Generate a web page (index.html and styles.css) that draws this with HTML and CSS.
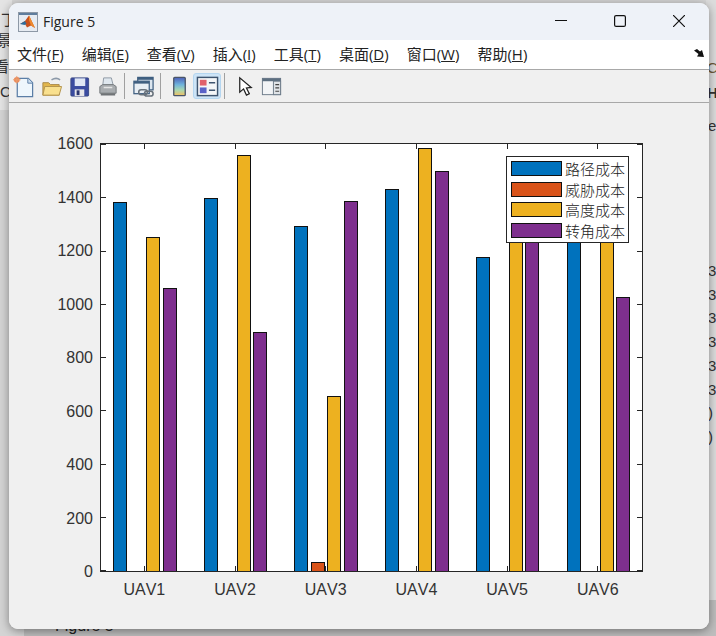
FILE: index.html
```html
<!DOCTYPE html>
<html lang="en">
<head>
    <meta charset="UTF-8">
    <title>Figure 5</title>
    <link rel="stylesheet" href="styles.css">
</head>
<body>
    <!-- bits of the window behind, only the edges show -->
    <div class="behind">
        <div class="behind-left">
            <span class="frag frag-a">丁</span>
            <span class="frag frag-b">景</span>
            <span class="frag frag-c">看</span>
            <span class="frag frag-d">C</span>
        </div>
        <div class="behind-right">
            <span class="frag frag-e">C</span>
            <span class="frag frag-f">H</span>
            <span class="frag frag-g">e</span>
            <div class="frag-list">
                <span>3</span><span>3</span><span>3</span><span>3</span><span>3</span><span>3</span><span>)</span><span>)</span>
            </div>
        </div>
        <div class="behind-bottom"><span>Figure 5</span></div>
    </div>

    <div class="window">
        <div class="titlebar">
            <svg class="app-icon" viewBox="0 0 20 20">
                <rect x="0.5" y="0.5" width="19" height="19" fill="#e6ebf2" stroke="#8d98a6"/>
                <rect x="1" y="1" width="18" height="2" fill="#5f7d9d"/>
                <path d="M2 12 L7 9 L11 3.5 L17 16 L13 13.5 L9 15.5 L7 12 Z" fill="#c8501c"/>
                <path d="M11 3.5 L17 16 L13 13.5 L11 8 Z" fill="#ee8a2e"/>
                <path d="M2 12 L7 9 L8.5 12 L6.5 13 Z" fill="#2d6c9c"/>
            </svg>
            <span class="title">Figure 5</span>
            <div class="win-controls">
                <svg viewBox="0 0 12 12"><path d="M0 5.5 H12" stroke="#111" stroke-width="1.2" fill="none"/></svg>
                <svg viewBox="0 0 12 12"><rect x="0.6" y="0.6" width="10.8" height="10.8" rx="1.5" stroke="#111" stroke-width="1.2" fill="none"/></svg>
                <svg viewBox="0 0 12 12"><path d="M0 0 L12 12 M12 0 L0 12" stroke="#111" stroke-width="1.2" fill="none"/></svg>
            </div>
        </div>

        <div class="menubar">
            <span class="menu-item">文件(<u>F</u>)</span>
            <span class="menu-item">编辑(<u>E</u>)</span>
            <span class="menu-item">查看(<u>V</u>)</span>
            <span class="menu-item">插入(<u>I</u>)</span>
            <span class="menu-item">工具(<u>T</u>)</span>
            <span class="menu-item">桌面(<u>D</u>)</span>
            <span class="menu-item">窗口(<u>W</u>)</span>
            <span class="menu-item">帮助(<u>H</u>)</span>
            <svg class="dock-arrow" viewBox="0 0 10 8"><path d="M0 1.5 L3 0 L6 2.5 L8 1 L10 8 L3 7.5 L4.5 5 Z" fill="#111"/></svg>
        </div>

        <div class="toolbar">
            <div class="tool">
                <svg viewBox="0 0 24 24">
                    <path d="M5.5 3.5 H17 L21.5 8 V22.5 H5.5 Z" fill="#eef6fc" stroke="#5b7ea6" stroke-width="1.3"/>
                    <path d="M16.5 3.5 V8.5 H21.5" fill="#cfe0f0" stroke="#5b7ea6"/>
                    <circle cx="5" cy="5" r="3" fill="#ec8a5a"/>
                    <path d="M5 1 V9 M1 5 H9" stroke="#e8a070" stroke-width="1"/>
                </svg>
            </div>
            <div class="tool">
                <svg viewBox="0 0 24 24">
                    <path d="M12 5 Q17 2 21 5" stroke="#8c99a8" stroke-width="1.6" fill="none"/>
                    <path d="M3 8 H9 L11 10 H20 V21 H3 Z" fill="#e2b64c" stroke="#a8894a"/>
                    <path d="M3 21 L5 12 H22.5 L20 21 Z" fill="#f9e08e" stroke="#b3934c"/>
                </svg>
            </div>
            <div class="tool">
                <svg viewBox="0 0 24 24">
                    <rect x="3" y="3" width="18.5" height="19" rx="1" fill="#3a4ba0" stroke="#3c4a86"/>
                    <rect x="7" y="3.5" width="11" height="8" fill="#dfe6f4"/>
                    <rect x="7" y="15" width="10" height="7" fill="#e6e6ea"/>
                    <rect x="9" y="16" width="3" height="5" fill="#2b3570"/>
                </svg>
            </div>
            <div class="tool">
                <svg viewBox="0 0 24 24">
                    <path d="M8 3 H16 L18 11 H7 Z" fill="#dfe7ee" stroke="#8f9aa4"/>
                    <path d="M4 12 L7 10 H18 L21 12 V19 H4 Z" fill="#a8acaf" stroke="#74787c"/>
                    <path d="M5 19 H20 V21.5 H5 Z" fill="#6f7376"/>
                    <path d="M8 13 H17" stroke="#e4e4e4" stroke-width="1.5"/>
                </svg>
            </div>
            <div class="tool-sep"></div>
            <div class="tool">
                <svg viewBox="0 0 24 24">
                    <rect x="6" y="2.5" width="16" height="13" fill="#dce6ef" stroke="#3f5f80" stroke-width="1.3"/>
                    <rect x="6" y="2.5" width="16" height="2.5" fill="#3f5f80"/>
                    <rect x="2" y="6.5" width="16" height="13" fill="#e8eef4" stroke="#3f5f80" stroke-width="1.3"/>
                    <rect x="2" y="6.5" width="16" height="2.5" fill="#3f5f80"/>
                    <rect x="7" y="15.5" width="9" height="5" rx="2.5" fill="none" stroke="#68727c" stroke-width="1.6"/>
                    <rect x="13" y="17" width="9" height="5" rx="2.5" fill="none" stroke="#68727c" stroke-width="1.6"/>
                </svg>
            </div>
            <div class="tool-sep"></div>
            <div class="tool">
                <svg viewBox="0 0 24 24">
                    <defs>
                        <linearGradient id="cbar" x1="0" y1="0" x2="0" y2="1">
                            <stop offset="0" stop-color="#4d5fb8"/>
                            <stop offset="0.4" stop-color="#6fb4dc"/>
                            <stop offset="0.7" stop-color="#a9d8b0"/>
                            <stop offset="1" stop-color="#f2c060"/>
                        </linearGradient>
                    </defs>
                    <rect x="6" y="2.5" width="12" height="19" rx="1" fill="url(#cbar)" stroke="#4a5568" stroke-width="1.4"/>
                </svg>
            </div>
            <div class="tool tool-on">
                <svg viewBox="0 0 24 24">
                    <rect x="1.5" y="2.5" width="21" height="19" fill="#f4f6f8" stroke="#3f5570" stroke-width="1.5"/>
                    <rect x="4" y="5" width="7" height="6" fill="#e0606c"/>
                    <rect x="4" y="13" width="7" height="6" fill="#5a62c8"/>
                    <path d="M13.5 8 H20 M13.5 16 H20" stroke="#3f5570" stroke-width="1.6"/>
                </svg>
            </div>
            <div class="tool-sep"></div>
            <div class="tool tool-gap">
                <svg viewBox="0 0 24 24">
                    <path d="M6 3 L6 18 L10 14.5 L13 21 L16 19.5 L13 13.5 L18 13 Z" fill="#fff" stroke="#222" stroke-width="1.3"/>
                </svg>
            </div>
            <div class="tool tool-left">
                <svg viewBox="0 0 24 24">
                    <rect x="2.5" y="3.5" width="19" height="17" fill="#f2f4f6" stroke="#6e7c8a"/>
                    <rect x="2.5" y="3.5" width="19" height="3" fill="#5d6f80"/>
                    <rect x="14" y="6.5" width="7.5" height="14" fill="#dfe3e7" stroke="#6e7c8a"/>
                    <path d="M16 10 H20 M16 13.5 H20 M16 17 H20" stroke="#444" stroke-width="1.2"/>
                </svg>
            </div>
        </div>

        <div class="figure">
            <div class="plot">
                <div class="y-labels">
                    <span>1600</span><span>1400</span><span>1200</span><span>1000</span><span>800</span><span>600</span><span>400</span><span>200</span><span>0</span>
                </div>
                <div class="plot-main">
                    <div class="axes">
                        <div class="y-ticks">
                            <i></i><i></i><i></i><i></i><i></i><i></i><i></i><i></i><i></i>
                        </div>
                        <div class="groups">
                            <div class="group">
                                <div class="bar path" style="height:86.4%"></div>
                                <div class="bar threat" style="height:0"></div>
                                <div class="bar alt" style="height:78.2%"></div>
                                <div class="bar turn" style="height:66.3%"></div>
                            </div>
                            <div class="group">
                                <div class="bar path" style="height:87.3%"></div>
                                <div class="bar threat" style="height:0"></div>
                                <div class="bar alt" style="height:97.4%"></div>
                                <div class="bar turn" style="height:56%"></div>
                            </div>
                            <div class="group">
                                <div class="bar path" style="height:80.8%"></div>
                                <div class="bar threat" style="height:2.2%"></div>
                                <div class="bar alt" style="height:41%"></div>
                                <div class="bar turn" style="height:86.7%"></div>
                            </div>
                            <div class="group">
                                <div class="bar path" style="height:89.5%"></div>
                                <div class="bar threat" style="height:0"></div>
                                <div class="bar alt" style="height:99%"></div>
                                <div class="bar turn" style="height:93.7%"></div>
                            </div>
                            <div class="group">
                                <div class="bar path" style="height:73.5%"></div>
                                <div class="bar threat" style="height:0"></div>
                                <div class="bar alt" style="height:80%"></div>
                                <div class="bar turn" style="height:80%"></div>
                            </div>
                            <div class="group">
                                <div class="bar path" style="height:80%"></div>
                                <div class="bar threat" style="height:0"></div>
                                <div class="bar alt" style="height:80%"></div>
                                <div class="bar turn" style="height:64.2%"></div>
                            </div>
                        </div>
                        <div class="legend">
                            <div class="legend-row"><span class="swatch path"></span>路径成本</div>
                            <div class="legend-row"><span class="swatch threat"></span>威胁成本</div>
                            <div class="legend-row"><span class="swatch alt"></span>高度成本</div>
                            <div class="legend-row"><span class="swatch turn"></span>转角成本</div>
                        </div>
                    </div>
                    <div class="x-labels">
                        <span>UAV1</span><span>UAV2</span><span>UAV3</span><span>UAV4</span><span>UAV5</span><span>UAV6</span>
                    </div>
                </div>
            </div>
        </div>
    </div>
</body>
</html>
```

FILE: styles.css
```css
* {
    box-sizing: border-box;
}
html, body {
    margin: 0;
    height: 100%;
}
body {
    position: relative;
    width: 716px;
    height: 636px;
    overflow: hidden;
    background-color: #d4d4d4;
    font-family: "Liberation Sans", "Noto Sans CJK SC", sans-serif;
}

/* window behind */
.behind-left {
    position: absolute;
    left: 0;
    top: 0;
    width: 12px;
    height: 110px;
    background-color: #e4e4e4;
}
.behind-right {
    position: absolute;
    left: 706px;
    top: 0;
    width: 10px;
    height: 636px;
    background-color: #dcdcdc;
}
.behind-bottom {
    position: absolute;
    left: 24px;
    top: 600px;
    width: 692px;
    height: 36px;
    padding: 17px 0 0 31px;
    background-color: #bdbdbd;
    font-size: 16px;
    color: #222;
}
.frag {
    position: absolute;
    font-size: 15px;
    line-height: 16px;
    color: #333;
}
.frag-a { left: 1px; top: 12px; }
.frag-b { left: -3px; top: 33px; }
.frag-c { left: -6px; top: 59px; }
.frag-d { left: 0; top: 84px; }
.frag-e { left: 1px; top: 60px; color: #6b5a3a; }
.frag-f { left: 1px; top: 85px; font-weight: bold; }
.frag-g { left: 2px; top: 118px; }
.frag-list {
    position: absolute;
    left: 2px;
    top: 259px;
    display: flex;
    flex-direction: column;
    font-size: 15px;
    line-height: 23.7px;
    color: #333;
}

/* figure window */
.window {
    position: absolute;
    left: 9px;
    top: 3px;
    width: 700px;
    height: 626px;
    display: flex;
    flex-direction: column;
    background-color: #f0f0f0;
    border-radius: 9px;
    overflow: hidden;
    box-shadow: 0 2px 10px rgba(0, 0, 0, 0.4);
}
.titlebar {
    height: 37px;
    flex: none;
    display: flex;
    align-items: center;
    padding-left: 9px;
    background-color: #eef2f8;
}
.app-icon {
    width: 20px;
    height: 20px;
}
.title {
    margin-left: 5px;
    font-family: "Open Sans", sans-serif;
    font-size: 14px;
    color: #222;
}
.win-controls {
    margin-left: auto;
    margin-top: -2px;
    display: flex;
    gap: 47px;
    padding-right: 24px;
}
.win-controls svg {
    width: 12px;
    height: 12px;
}

.menubar {
    height: 30px;
    flex: none;
    display: flex;
    align-items: center;
    gap: 18px;
    padding-left: 8px;
    padding-bottom: 3px;
    background-color: #fff;
    border-bottom: 1px solid #a8a8a8;
    font-family: "Open Sans", "Noto Sans CJK SC", sans-serif;
    font-size: 15px;
    color: #222;
}
.dock-arrow {
    width: 10px;
    height: 8px;
    margin-left: auto;
    margin-right: 5px;
}

.toolbar {
    height: 33px;
    flex: none;
    display: flex;
    align-items: center;
    background-color: #f0f0f0;
    border-bottom: 1px solid #a8a8a8;
}
.tool {
    width: 28px;
    height: 26px;
    display: flex;
    align-items: center;
    justify-content: center;
}
.tool svg {
    width: 23px;
    height: 23px;
}
.tool-on {
    background-color: #cde4f7;
    border: 1px solid #b5d6f0;
    border-radius: 3px;
}
.tool-gap {
    margin-left: 2px;
}
.tool-left {
    margin-left: -2px;
}
.tool-sep {
    width: 1px;
    height: 26px;
    margin: 0 4px 0 3px;
    background-color: #a0a0a0;
}

/* plot */
.figure {
    flex: 1;
    padding-top: 40px;
    background-color: #f0f0f0;
}
.plot {
    display: flex;
    color: #333;
    font-size: 16px;
    font-kerning: none;
}
.y-labels {
    width: 84px;
    height: 445px;
    margin-top: -8px;
    margin-right: 7px;
    display: flex;
    flex-direction: column;
    justify-content: space-between;
    align-items: flex-end;
    line-height: 16px;
    padding-top: 1px;
}
.axes {
    position: relative;
    width: 543px;
    height: 429px;
    background-color: #fff;
    border: 1px solid #262626;
}
.y-ticks {
    position: absolute;
    inset: 0;
    display: flex;
    flex-direction: column;
    justify-content: space-between;
}
.y-ticks i {
    display: flex;
    justify-content: space-between;
    height: 1px;
}
.y-ticks i::before,
.y-ticks i::after {
    content: "";
    width: 5px;
    background-color: #262626;
}
.groups {
    position: absolute;
    left: -2px;
    top: 0;
    bottom: 0;
    display: flex;
}
.group {
    position: relative;
    width: 90.7px;
    height: 100%;
    display: flex;
    align-items: flex-end;
    justify-content: center;
    gap: 2.5px;
    padding-left: 1px;
}
.group::before,
.group::after {
    content: "";
    position: absolute;
    left: 45px;
    width: 1px;
    height: 5px;
    background-color: #262626;
}
.group::before {
    top: 0;
}
.group::after {
    bottom: 0;
}
.bar {
    position: relative;
    z-index: 1;
    width: 14px;
    border: 1px solid #111;
    border-bottom: 0;
}
.bar[style*="height:0"] {
    border: 0;
}
.path { background-color: #0072bd; }
.threat { background-color: #d95319; }
.alt { background-color: #edb120; }
.turn { background-color: #7e2f8e; }

.legend {
    position: absolute;
    z-index: 2;
    left: 405px;
    top: 12px;
    width: 123px;
    height: 87px;
    padding: 4px 0 0 4px;
    display: flex;
    flex-direction: column;
    gap: 5px;
    background-color: #fff;
    border: 1px solid #262626;
    font-family: "Noto Sans CJK SC", sans-serif;
    font-size: 15px;
    font-weight: 300;
    color: #222;
}
.legend-row {
    display: flex;
    align-items: center;
    height: 15.5px;
    line-height: 15px;
    white-space: nowrap;
}
.swatch {
    width: 51px;
    height: 15px;
    margin-right: 3px;
    border: 1px solid #111;
}
.x-labels {
    display: flex;
    margin-left: -1px;
    margin-top: 8px;
    line-height: 20px;
}
.x-labels span {
    width: 90.7px;
    text-align: center;
}
```
